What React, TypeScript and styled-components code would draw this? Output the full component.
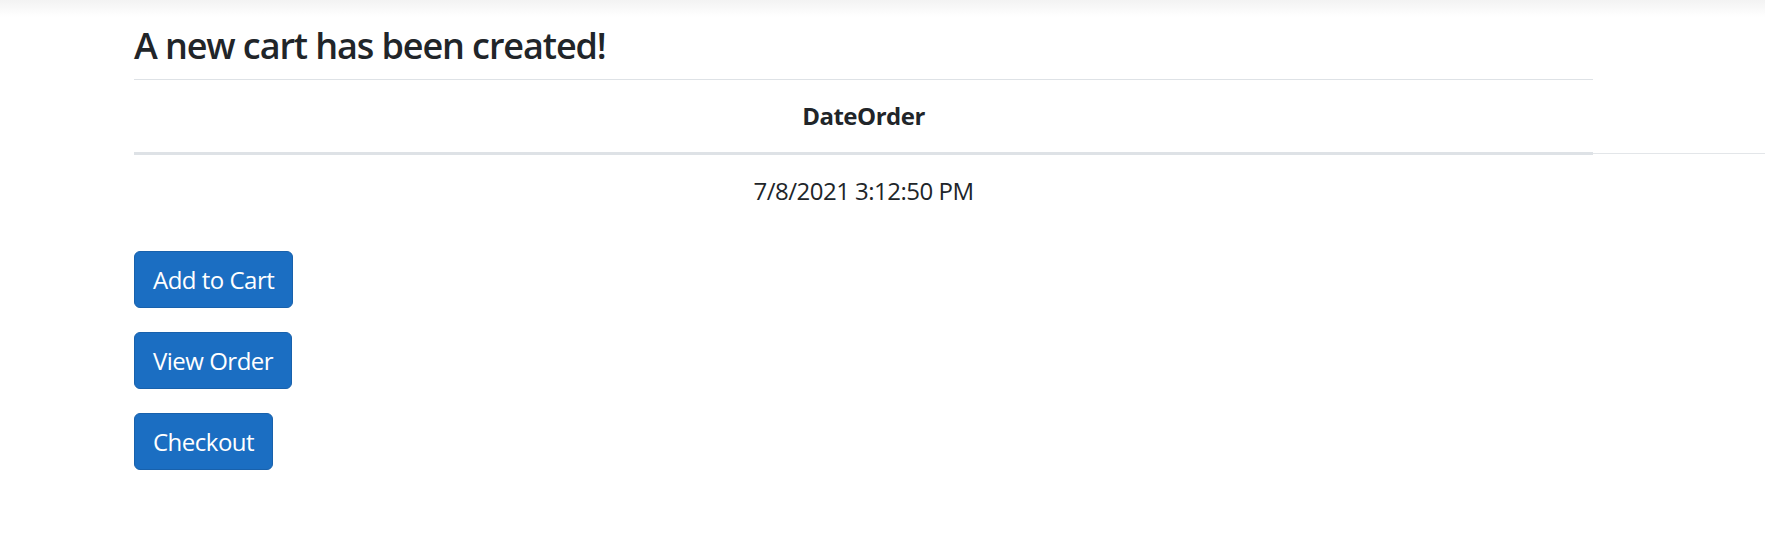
import styled, { createGlobalStyle } from "styled-components";

const Global = createGlobalStyle`
  html, body {
    margin: 0;
    padding: 0;
    background: #fff;
  }

  body {
    font-family: "Open Sans", "Noto Sans", sans-serif;
    color: #212529;
  }
`;

const Shade = styled.div`
  height: 17px;
  background: linear-gradient(to bottom, #f3f3f3, #ffffff);
`;

const Page = styled.main`
  padding-left: 134px;
`;

const Title = styled.h4`
  margin: 7px 0 12px;
  width: 1459px;
  font-size: 36px;
  line-height: 43px;
  font-weight: 600;
  letter-spacing: -1.1px;
`;

const TableRow = styled.div`
  display: flex;
  align-items: flex-start;
`;

const Table = styled.table`
  width: 1459px;
  flex-shrink: 0;
  border-collapse: collapse;
  margin-bottom: 24px;
  font-size: 24px;
  line-height: 36px;
  letter-spacing: -0.5px;
`;

const Head = styled.th`
  padding: 18px;
  text-align: center;
  font-weight: 700;
  border-top: 1px solid #dee2e6;
  border-bottom: 3px solid #dee2e6;
`;

const Cell = styled.td`
  padding: 18px;
  text-align: center;
`;

const Filler = styled.div`
  flex: 1;
  height: 74px;
  border-bottom: 1px solid #e3e6e9;
`;

const Actions = styled.div`
  display: flex;
  flex-direction: column;
  align-items: flex-start;
  gap: 24px;
`;

const Button = styled.button`
  font-family: inherit;
  font-size: 24px;
  line-height: 36px;
  letter-spacing: -0.5px;
  padding: 9.5px 18px;
  border: 1px solid #1861ac;
  border-radius: 6px;
  background: #1b6ec2;
  color: #fff;
  cursor: pointer;
`;

export default function App() {
  return (
    <>
      <Global />
      <Shade />
      <Page>
        <Title>A new cart has been created!</Title>
        <TableRow>
          <Table>
            <thead>
              <tr>
                <Head>DateOrder</Head>
              </tr>
            </thead>
            <tbody>
              <tr>
                <Cell>7/8/2021 3:12:50 PM</Cell>
              </tr>
            </tbody>
          </Table>
          <Filler />
        </TableRow>
        <Actions>
          <Button>Add to Cart</Button>
          <Button>View Order</Button>
          <Button>Checkout</Button>
        </Actions>
      </Page>
    </>
  );
}
